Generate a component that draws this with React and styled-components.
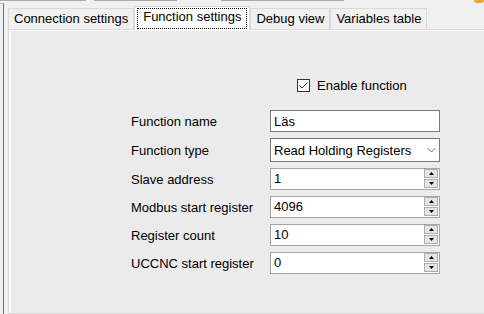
import React from "react";
import styled, { createGlobalStyle } from "styled-components";

const GlobalStyle = createGlobalStyle`
  html, body {
    margin: 0;
    padding: 0;
    background: #f0f0f0;
  }
  body {
    font-family: "Liberation Sans", Arial, sans-serif;
    font-size: 13px;
    color: #000;
  }
`;

const Window = styled.div`
  width: 484px;
  height: 314px;
  overflow: hidden;
  background: #f0f0f0;
  display: flex;
  flex-direction: column;
`;

const TopStrip = styled.div`
  display: flex;
  height: 2px;
  flex-shrink: 0;
`;

const Stub = styled.div`
  width: ${p => p.$w}px;
  margin-left: ${p => p.$gap || 0}px;
  height: ${p => (p.$orange ? 3 : 1)}px;
  background: ${p => (p.$orange ? "#f2a51f" : "#a9a9a9")};
  border-radius: ${p => (p.$orange ? "0 0 5px 5px" : "0")};
  flex-shrink: 0;
`;

const Body = styled.div`
  display: flex;
  flex: 1;
  min-height: 0;
`;

const LeftFrame = styled.div`
  width: 3px;
  margin-top: 1px;
  border-top: 1px solid #b9b9b9;
  border-right: 1px solid #6d6d6d;
  flex-shrink: 0;
`;

const TabControl = styled.div`
  margin-left: 4px;
  width: 520px;
  flex-shrink: 0;
  display: flex;
  flex-direction: column;
`;

const TabStrip = styled.div`
  display: flex;
  align-items: flex-end;
  margin-top: 4px;
  height: 23px;
  flex-shrink: 0;
`;

const Tab = styled.div`
  box-sizing: border-box;
  height: ${p => (p.$selected ? 25 : 21)}px;
  margin-bottom: ${p => (p.$selected ? -2 : 0)}px;
  padding: ${p => (p.$selected ? "1px 2px 0" : "0 5px")};
  border: 1px solid #d9d9d9;
  border-bottom: none;
  background: ${p => (p.$selected ? "#fff" : "#f0f0f0")};
  line-height: 20px;
  white-space: nowrap;
  position: relative;
  z-index: ${p => (p.$selected ? 2 : 1)};
`;

const FocusLabel = styled.span`
  display: block;
  box-sizing: border-box;
  height: 21px;
  padding: 0 5px;
  border: 1px dotted #000;
  line-height: 16px;
`;

const Panel = styled.div`
  flex: 1;
  border: 1px solid #d9d9d9;
  background: #fafafa;
  padding: 1px 2px 0;
  display: flex;
  flex-direction: column;
`;

const Page = styled.div`
  flex: 1;
  background: #ebebeb;
`;

const Form = styled.div`
  display: grid;
  grid-template-columns: 139px 170px;
  row-gap: 6px;
  align-items: center;
  padding: 48px 0 0 120px;
`;

const EnableRow = styled.div`
  grid-column: 2;
  margin-left: 27px;
  margin-bottom: 12px;
  height: 13px;
  display: flex;
  align-items: center;
  gap: 7px;
  white-space: nowrap;
`;

const CheckBox = styled.span`
  box-sizing: border-box;
  width: 13px;
  height: 13px;
  border: 1px solid #333;
  background: #fff;
  display: flex;
`;

const Label = styled.div`
  grid-column: 1;
  white-space: nowrap;
`;

const TextBox = styled.input`
  box-sizing: border-box;
  height: 22px;
  width: 170px;
  margin: 0;
  padding: 0 3px;
  border: 1px solid #7a7a7a;
  border-radius: 0;
  background: #fff;
  font: inherit;
  color: #000;
  outline: none;
`;

const Select = styled.div`
  box-sizing: border-box;
  height: 24px;
  width: 170px;
  padding: 0 3px;
  border: 1px solid #7a7a7a;
  background: #fff;
  display: flex;
  align-items: center;
  justify-content: space-between;
  white-space: nowrap;
`;

const Spinner = styled.div`
  box-sizing: border-box;
  height: 22px;
  width: 170px;
  border: 1px solid #a6a6a6;
  background: #fff;
  display: flex;
  padding: 0 1px 0 0;
`;

const SpinValue = styled.div`
  flex: 1;
  padding-left: 3px;
  line-height: 20px;
`;

const SpinStack = styled.div`
  display: flex;
  flex-direction: column;
  gap: 1px;
`;

const SpinButton = styled.div`
  box-sizing: border-box;
  width: 14px;
  height: 9px;
  border: 1px solid #adadad;
  background: #e5e5e5;
  display: flex;
  align-items: center;
  justify-content: center;
`;

const Chevron = () => (
  <svg width="9" height="6" viewBox="0 0 9 6">
    <polyline points="0.5,1 4.5,5 8.5,1" fill="none" stroke="#6a6a6a" strokeWidth="1" />
  </svg>
);

const Arrow = ({ down }) => (
  <svg width="5" height="3" viewBox="0 0 5 3">
    <polygon points={down ? "0,0 5,0 2.5,3" : "0,3 5,3 2.5,0"} fill="#000" />
  </svg>
);

const NumberField = ({ value }) => (
  <Spinner>
    <SpinValue>{value}</SpinValue>
    <SpinStack>
      <SpinButton><Arrow /></SpinButton>
      <SpinButton><Arrow down /></SpinButton>
    </SpinStack>
  </Spinner>
);

const tabs = ["Connection settings", "Function settings", "Debug view", "Variables table"];

const numbers = [
  ["Slave address", "1"],
  ["Modbus start register", "4096"],
  ["Register count", "10"],
  ["UCCNC start register", "0"],
];

export default function App() {
  return (
    <Window>
      <GlobalStyle />
      <TopStrip>
        <Stub $w={86} />
        <Stub $w={83} $gap={8} />
        <Stub $w={123} $gap={44} />
        <Stub $w={10} $gap={130} $orange />
      </TopStrip>
      <Body>
        <LeftFrame />
        <TabControl>
          <TabStrip>
            {tabs.map(t =>
              t === "Function settings" ? (
                <Tab key={t} $selected>
                  <FocusLabel>{t}</FocusLabel>
                </Tab>
              ) : (
                <Tab key={t}>{t}</Tab>
              )
            )}
          </TabStrip>
          <Panel>
            <Page>
              <Form>
                <EnableRow>
                  <CheckBox>
                    <svg width="11" height="11" viewBox="0 0 11 11">
                      <polyline points="1.5,5.5 4,8 9.5,2.5" fill="none" stroke="#333" strokeWidth="1" />
                    </svg>
                  </CheckBox>
                  Enable function
                </EnableRow>
                <Label>Function name</Label>
                <TextBox readOnly value="Läs" />
                <Label>Function type</Label>
                <Select>
                  <span>Read Holding Registers</span>
                  <Chevron />
                </Select>
                {numbers.map(([label, value]) => (
                  <React.Fragment key={label}>
                    <Label>{label}</Label>
                    <NumberField value={value} />
                  </React.Fragment>
                ))}
              </Form>
            </Page>
          </Panel>
        </TabControl>
      </Body>
    </Window>
  );
}
